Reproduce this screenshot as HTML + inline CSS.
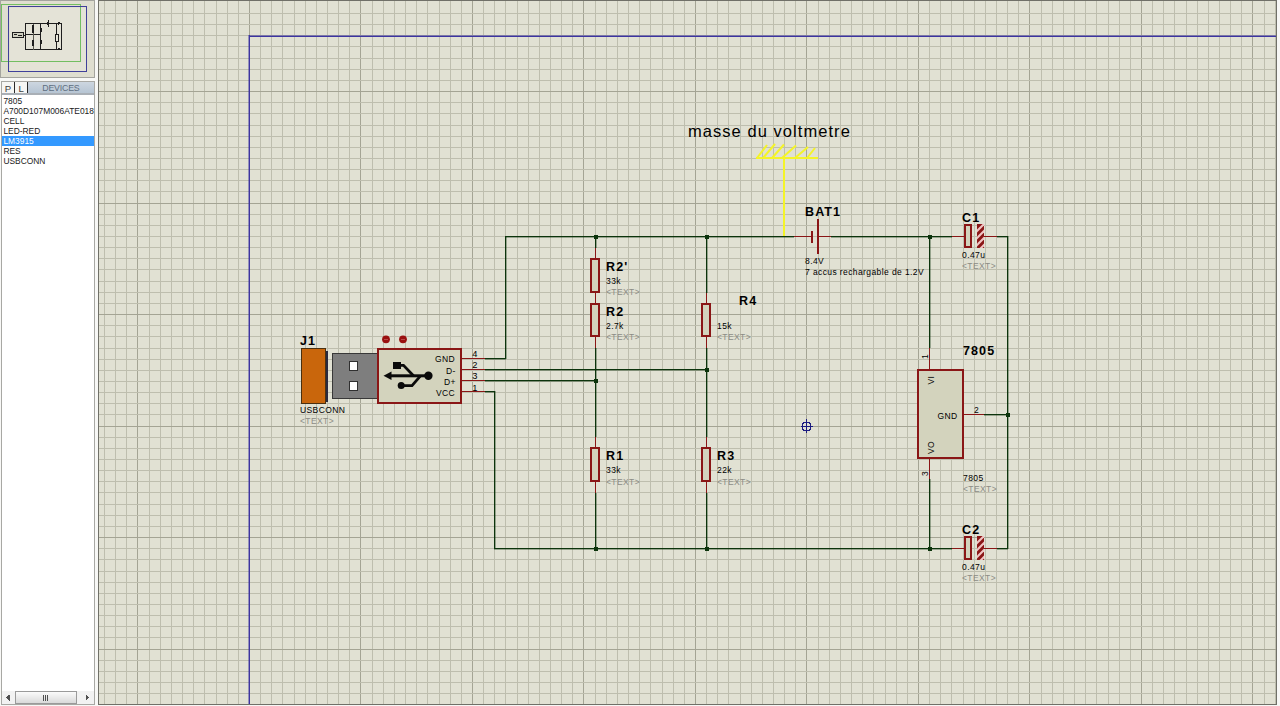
<!DOCTYPE html>
<html><head><meta charset="utf-8"><style>
html,body{margin:0;padding:0;width:1280px;height:706px;overflow:hidden;background:#F7F7F5;}
svg{position:absolute;left:0;top:0;font-family:"Liberation Sans",sans-serif;}
#list{position:absolute;left:1px;top:81px;width:93px;height:623px;background:#FFFFFF;border:1px solid #9C9C98;border-top:none;font-family:"Liberation Sans",sans-serif;}
#hdr{position:relative;height:14px;background:linear-gradient(#C9D3DE,#B2C2D2);border-bottom:1px solid #9AA4AE;font-size:9px;}
.tb{position:absolute;top:0;height:13px;width:11px;background:#F2F2EE;border-right:1px solid #606060;color:#303030;text-align:center;line-height:13px;font-size:9.5px;}
#dev{position:absolute;left:27px;right:0;top:0;height:14px;line-height:14px;text-align:center;color:#7A8898;font-size:9px;letter-spacing:0.3px;}
.it{height:10px;line-height:10px;font-size:9px;padding-left:2px;color:#141414;white-space:nowrap;}
.sel{background:#3399FF;color:#FFFFFF;}
#sb{position:absolute;left:0;right:0;bottom:0;height:12px;background:#F0F0F0;}
</style></head><body>
<svg width="1280" height="706" viewBox="0 0 1280 706" shape-rendering="crispEdges">
<rect x="98" y="0" width="1178" height="704" fill="#E1E1D3"/><rect x="104" y="0" width="1" height="704" fill="#BEBEAE"/><rect x="115" y="0" width="1" height="704" fill="#BEBEAE"/><rect x="126" y="0" width="1" height="704" fill="#BEBEAE"/><rect x="137" y="0" width="1" height="704" fill="#A4A494"/><rect x="149" y="0" width="1" height="704" fill="#BEBEAE"/><rect x="160" y="0" width="1" height="704" fill="#BEBEAE"/><rect x="171" y="0" width="1" height="704" fill="#BEBEAE"/><rect x="182" y="0" width="1" height="704" fill="#BEBEAE"/><rect x="193" y="0" width="1" height="704" fill="#BEBEAE"/><rect x="204" y="0" width="1" height="704" fill="#BEBEAE"/><rect x="216" y="0" width="1" height="704" fill="#BEBEAE"/><rect x="227" y="0" width="1" height="704" fill="#BEBEAE"/><rect x="238" y="0" width="1" height="704" fill="#BEBEAE"/><rect x="249" y="0" width="1" height="704" fill="#A4A494"/><rect x="260" y="0" width="1" height="704" fill="#BEBEAE"/><rect x="271" y="0" width="1" height="704" fill="#BEBEAE"/><rect x="282" y="0" width="1" height="704" fill="#BEBEAE"/><rect x="294" y="0" width="1" height="704" fill="#BEBEAE"/><rect x="305" y="0" width="1" height="704" fill="#BEBEAE"/><rect x="316" y="0" width="1" height="704" fill="#BEBEAE"/><rect x="327" y="0" width="1" height="704" fill="#BEBEAE"/><rect x="338" y="0" width="1" height="704" fill="#BEBEAE"/><rect x="349" y="0" width="1" height="704" fill="#BEBEAE"/><rect x="360" y="0" width="1" height="704" fill="#A4A494"/><rect x="372" y="0" width="1" height="704" fill="#BEBEAE"/><rect x="383" y="0" width="1" height="704" fill="#BEBEAE"/><rect x="394" y="0" width="1" height="704" fill="#BEBEAE"/><rect x="405" y="0" width="1" height="704" fill="#BEBEAE"/><rect x="416" y="0" width="1" height="704" fill="#BEBEAE"/><rect x="427" y="0" width="1" height="704" fill="#BEBEAE"/><rect x="439" y="0" width="1" height="704" fill="#BEBEAE"/><rect x="450" y="0" width="1" height="704" fill="#BEBEAE"/><rect x="461" y="0" width="1" height="704" fill="#BEBEAE"/><rect x="472" y="0" width="1" height="704" fill="#A4A494"/><rect x="483" y="0" width="1" height="704" fill="#BEBEAE"/><rect x="494" y="0" width="1" height="704" fill="#BEBEAE"/><rect x="505" y="0" width="1" height="704" fill="#BEBEAE"/><rect x="517" y="0" width="1" height="704" fill="#BEBEAE"/><rect x="528" y="0" width="1" height="704" fill="#BEBEAE"/><rect x="539" y="0" width="1" height="704" fill="#BEBEAE"/><rect x="550" y="0" width="1" height="704" fill="#BEBEAE"/><rect x="561" y="0" width="1" height="704" fill="#BEBEAE"/><rect x="572" y="0" width="1" height="704" fill="#BEBEAE"/><rect x="583" y="0" width="1" height="704" fill="#A4A494"/><rect x="595" y="0" width="1" height="704" fill="#BEBEAE"/><rect x="606" y="0" width="1" height="704" fill="#BEBEAE"/><rect x="617" y="0" width="1" height="704" fill="#BEBEAE"/><rect x="628" y="0" width="1" height="704" fill="#BEBEAE"/><rect x="639" y="0" width="1" height="704" fill="#BEBEAE"/><rect x="650" y="0" width="1" height="704" fill="#BEBEAE"/><rect x="662" y="0" width="1" height="704" fill="#BEBEAE"/><rect x="673" y="0" width="1" height="704" fill="#BEBEAE"/><rect x="684" y="0" width="1" height="704" fill="#BEBEAE"/><rect x="695" y="0" width="1" height="704" fill="#A4A494"/><rect x="706" y="0" width="1" height="704" fill="#BEBEAE"/><rect x="717" y="0" width="1" height="704" fill="#BEBEAE"/><rect x="728" y="0" width="1" height="704" fill="#BEBEAE"/><rect x="740" y="0" width="1" height="704" fill="#BEBEAE"/><rect x="751" y="0" width="1" height="704" fill="#BEBEAE"/><rect x="762" y="0" width="1" height="704" fill="#BEBEAE"/><rect x="773" y="0" width="1" height="704" fill="#BEBEAE"/><rect x="784" y="0" width="1" height="704" fill="#BEBEAE"/><rect x="795" y="0" width="1" height="704" fill="#BEBEAE"/><rect x="806" y="0" width="1" height="704" fill="#A4A494"/><rect x="818" y="0" width="1" height="704" fill="#BEBEAE"/><rect x="829" y="0" width="1" height="704" fill="#BEBEAE"/><rect x="840" y="0" width="1" height="704" fill="#BEBEAE"/><rect x="851" y="0" width="1" height="704" fill="#BEBEAE"/><rect x="862" y="0" width="1" height="704" fill="#BEBEAE"/><rect x="873" y="0" width="1" height="704" fill="#BEBEAE"/><rect x="885" y="0" width="1" height="704" fill="#BEBEAE"/><rect x="896" y="0" width="1" height="704" fill="#BEBEAE"/><rect x="907" y="0" width="1" height="704" fill="#BEBEAE"/><rect x="918" y="0" width="1" height="704" fill="#A4A494"/><rect x="929" y="0" width="1" height="704" fill="#BEBEAE"/><rect x="940" y="0" width="1" height="704" fill="#BEBEAE"/><rect x="951" y="0" width="1" height="704" fill="#BEBEAE"/><rect x="963" y="0" width="1" height="704" fill="#BEBEAE"/><rect x="974" y="0" width="1" height="704" fill="#BEBEAE"/><rect x="985" y="0" width="1" height="704" fill="#BEBEAE"/><rect x="996" y="0" width="1" height="704" fill="#BEBEAE"/><rect x="1007" y="0" width="1" height="704" fill="#BEBEAE"/><rect x="1018" y="0" width="1" height="704" fill="#BEBEAE"/><rect x="1029" y="0" width="1" height="704" fill="#A4A494"/><rect x="1041" y="0" width="1" height="704" fill="#BEBEAE"/><rect x="1052" y="0" width="1" height="704" fill="#BEBEAE"/><rect x="1063" y="0" width="1" height="704" fill="#BEBEAE"/><rect x="1074" y="0" width="1" height="704" fill="#BEBEAE"/><rect x="1085" y="0" width="1" height="704" fill="#BEBEAE"/><rect x="1096" y="0" width="1" height="704" fill="#BEBEAE"/><rect x="1108" y="0" width="1" height="704" fill="#BEBEAE"/><rect x="1119" y="0" width="1" height="704" fill="#BEBEAE"/><rect x="1130" y="0" width="1" height="704" fill="#BEBEAE"/><rect x="1141" y="0" width="1" height="704" fill="#A4A494"/><rect x="1152" y="0" width="1" height="704" fill="#BEBEAE"/><rect x="1163" y="0" width="1" height="704" fill="#BEBEAE"/><rect x="1174" y="0" width="1" height="704" fill="#BEBEAE"/><rect x="1186" y="0" width="1" height="704" fill="#BEBEAE"/><rect x="1197" y="0" width="1" height="704" fill="#BEBEAE"/><rect x="1208" y="0" width="1" height="704" fill="#BEBEAE"/><rect x="1219" y="0" width="1" height="704" fill="#BEBEAE"/><rect x="1230" y="0" width="1" height="704" fill="#BEBEAE"/><rect x="1241" y="0" width="1" height="704" fill="#BEBEAE"/><rect x="1252" y="0" width="1" height="704" fill="#A4A494"/><rect x="1264" y="0" width="1" height="704" fill="#BEBEAE"/><rect x="1275" y="0" width="1" height="704" fill="#BEBEAE"/><rect x="98" y="13" width="1178" height="1" fill="#BEBEAE"/><rect x="98" y="24" width="1178" height="1" fill="#BEBEAE"/><rect x="98" y="35" width="1178" height="1" fill="#BEBEAE"/><rect x="98" y="46" width="1178" height="1" fill="#BEBEAE"/><rect x="98" y="58" width="1178" height="1" fill="#BEBEAE"/><rect x="98" y="69" width="1178" height="1" fill="#BEBEAE"/><rect x="98" y="80" width="1178" height="1" fill="#BEBEAE"/><rect x="98" y="91" width="1178" height="1" fill="#A4A494"/><rect x="98" y="102" width="1178" height="1" fill="#BEBEAE"/><rect x="98" y="113" width="1178" height="1" fill="#BEBEAE"/><rect x="98" y="125" width="1178" height="1" fill="#BEBEAE"/><rect x="98" y="136" width="1178" height="1" fill="#BEBEAE"/><rect x="98" y="147" width="1178" height="1" fill="#BEBEAE"/><rect x="98" y="158" width="1178" height="1" fill="#BEBEAE"/><rect x="98" y="169" width="1178" height="1" fill="#BEBEAE"/><rect x="98" y="180" width="1178" height="1" fill="#BEBEAE"/><rect x="98" y="191" width="1178" height="1" fill="#BEBEAE"/><rect x="98" y="203" width="1178" height="1" fill="#A4A494"/><rect x="98" y="214" width="1178" height="1" fill="#BEBEAE"/><rect x="98" y="225" width="1178" height="1" fill="#BEBEAE"/><rect x="98" y="236" width="1178" height="1" fill="#BEBEAE"/><rect x="98" y="247" width="1178" height="1" fill="#BEBEAE"/><rect x="98" y="258" width="1178" height="1" fill="#BEBEAE"/><rect x="98" y="269" width="1178" height="1" fill="#BEBEAE"/><rect x="98" y="281" width="1178" height="1" fill="#BEBEAE"/><rect x="98" y="292" width="1178" height="1" fill="#BEBEAE"/><rect x="98" y="303" width="1178" height="1" fill="#BEBEAE"/><rect x="98" y="314" width="1178" height="1" fill="#A4A494"/><rect x="98" y="325" width="1178" height="1" fill="#BEBEAE"/><rect x="98" y="336" width="1178" height="1" fill="#BEBEAE"/><rect x="98" y="348" width="1178" height="1" fill="#BEBEAE"/><rect x="98" y="359" width="1178" height="1" fill="#BEBEAE"/><rect x="98" y="370" width="1178" height="1" fill="#BEBEAE"/><rect x="98" y="381" width="1178" height="1" fill="#BEBEAE"/><rect x="98" y="392" width="1178" height="1" fill="#BEBEAE"/><rect x="98" y="403" width="1178" height="1" fill="#BEBEAE"/><rect x="98" y="414" width="1178" height="1" fill="#BEBEAE"/><rect x="98" y="426" width="1178" height="1" fill="#A4A494"/><rect x="98" y="437" width="1178" height="1" fill="#BEBEAE"/><rect x="98" y="448" width="1178" height="1" fill="#BEBEAE"/><rect x="98" y="459" width="1178" height="1" fill="#BEBEAE"/><rect x="98" y="470" width="1178" height="1" fill="#BEBEAE"/><rect x="98" y="481" width="1178" height="1" fill="#BEBEAE"/><rect x="98" y="492" width="1178" height="1" fill="#BEBEAE"/><rect x="98" y="504" width="1178" height="1" fill="#BEBEAE"/><rect x="98" y="515" width="1178" height="1" fill="#BEBEAE"/><rect x="98" y="526" width="1178" height="1" fill="#BEBEAE"/><rect x="98" y="537" width="1178" height="1" fill="#A4A494"/><rect x="98" y="548" width="1178" height="1" fill="#BEBEAE"/><rect x="98" y="559" width="1178" height="1" fill="#BEBEAE"/><rect x="98" y="571" width="1178" height="1" fill="#BEBEAE"/><rect x="98" y="582" width="1178" height="1" fill="#BEBEAE"/><rect x="98" y="593" width="1178" height="1" fill="#BEBEAE"/><rect x="98" y="604" width="1178" height="1" fill="#BEBEAE"/><rect x="98" y="615" width="1178" height="1" fill="#BEBEAE"/><rect x="98" y="626" width="1178" height="1" fill="#BEBEAE"/><rect x="98" y="637" width="1178" height="1" fill="#BEBEAE"/><rect x="98" y="649" width="1178" height="1" fill="#A4A494"/><rect x="98" y="660" width="1178" height="1" fill="#BEBEAE"/><rect x="98" y="671" width="1178" height="1" fill="#BEBEAE"/><rect x="98" y="682" width="1178" height="1" fill="#BEBEAE"/><rect x="98" y="693" width="1178" height="1" fill="#BEBEAE"/><rect x="98" y="0" width="1179" height="1" fill="#707068"/><rect x="98" y="0" width="1" height="705" fill="#707068"/><rect x="1276" y="0" width="1" height="705" fill="#707068"/><rect x="98" y="704" width="1179" height="1" fill="#707068"/><rect x="249" y="36" width="1027" height="1" fill="#3C34A0"/><rect x="249" y="35" width="1" height="669" fill="#3C34A0"/><rect x="249" y="35" width="1027" height="1" fill="#3C34A0" fill-opacity="0.5"/><rect x="248" y="35" width="1" height="669" fill="#3C34A0" fill-opacity="0.45"/><rect x="505" y="237" width="289" height="1" fill="#0C340C" fill-opacity="0.35"/><rect x="505" y="236" width="289" height="1" fill="#0C340C"/><rect x="831" y="237" width="121" height="1" fill="#0C340C" fill-opacity="0.35"/><rect x="831" y="236" width="121" height="1" fill="#0C340C"/><rect x="997" y="237" width="11" height="1" fill="#0C340C" fill-opacity="0.35"/><rect x="997" y="236" width="11" height="1" fill="#0C340C"/><rect x="506" y="236" width="1" height="123" fill="#0C340C" fill-opacity="0.35"/><rect x="505" y="236" width="1" height="123" fill="#0C340C"/><rect x="485" y="359" width="21" height="1" fill="#0C340C" fill-opacity="0.35"/><rect x="485" y="358" width="21" height="1" fill="#0C340C"/><rect x="485" y="370" width="222" height="1" fill="#0C340C" fill-opacity="0.35"/><rect x="485" y="369" width="222" height="1" fill="#0C340C"/><rect x="485" y="381" width="111" height="1" fill="#0C340C" fill-opacity="0.35"/><rect x="485" y="380" width="111" height="1" fill="#0C340C"/><rect x="485" y="392" width="10" height="1" fill="#0C340C" fill-opacity="0.35"/><rect x="485" y="391" width="10" height="1" fill="#0C340C"/><rect x="495" y="391" width="1" height="158" fill="#0C340C" fill-opacity="0.35"/><rect x="494" y="391" width="1" height="158" fill="#0C340C"/><rect x="494" y="549" width="458" height="1" fill="#0C340C" fill-opacity="0.35"/><rect x="494" y="548" width="458" height="1" fill="#0C340C"/><rect x="997" y="549" width="11" height="1" fill="#0C340C" fill-opacity="0.35"/><rect x="997" y="548" width="11" height="1" fill="#0C340C"/><rect x="1008" y="236" width="1" height="313" fill="#0C340C" fill-opacity="0.35"/><rect x="1007" y="236" width="1" height="313" fill="#0C340C"/><rect x="984" y="415" width="24" height="1" fill="#0C340C" fill-opacity="0.35"/><rect x="984" y="414" width="24" height="1" fill="#0C340C"/><rect x="596" y="236" width="1" height="12" fill="#0C340C" fill-opacity="0.35"/><rect x="595" y="236" width="1" height="12" fill="#0C340C"/><rect x="596" y="348" width="1" height="89" fill="#0C340C" fill-opacity="0.35"/><rect x="595" y="348" width="1" height="89" fill="#0C340C"/><rect x="596" y="493" width="1" height="56" fill="#0C340C" fill-opacity="0.35"/><rect x="595" y="493" width="1" height="56" fill="#0C340C"/><rect x="707" y="236" width="1" height="57" fill="#0C340C" fill-opacity="0.35"/><rect x="706" y="236" width="1" height="57" fill="#0C340C"/><rect x="707" y="348" width="1" height="89" fill="#0C340C" fill-opacity="0.35"/><rect x="706" y="348" width="1" height="89" fill="#0C340C"/><rect x="707" y="493" width="1" height="56" fill="#0C340C" fill-opacity="0.35"/><rect x="706" y="493" width="1" height="56" fill="#0C340C"/><rect x="930" y="236" width="1" height="112" fill="#0C340C" fill-opacity="0.35"/><rect x="929" y="236" width="1" height="112" fill="#0C340C"/><rect x="930" y="479" width="1" height="70" fill="#0C340C" fill-opacity="0.35"/><rect x="929" y="479" width="1" height="70" fill="#0C340C"/><rect x="593.5" y="234.5" width="4" height="4" fill="#0C340C"/><rect x="704.5" y="234.5" width="4" height="4" fill="#0C340C"/><rect x="927.5" y="234.5" width="4" height="4" fill="#0C340C"/><rect x="704.5" y="367.5" width="4" height="4" fill="#0C340C"/><rect x="593.5" y="378.5" width="4" height="4" fill="#0C340C"/><rect x="593.5" y="546.5" width="4" height="4" fill="#0C340C"/><rect x="704.5" y="546.5" width="4" height="4" fill="#0C340C"/><rect x="927.5" y="546.5" width="4" height="4" fill="#0C340C"/><rect x="1005.5" y="412.5" width="4" height="4" fill="#0C340C"/><rect x="595" y="248" width="1" height="10" fill="#8A1616"/><rect x="595" y="293" width="1" height="10" fill="#8A1616"/><rect x="591.0" y="259.0" width="8" height="33" fill="#D3D3BD" stroke="#8A1616" stroke-width="2"/><rect x="595" y="293" width="1" height="10" fill="#8A1616"/><rect x="595" y="337" width="1" height="11" fill="#8A1616"/><rect x="591.0" y="304.0" width="8" height="32" fill="#D3D3BD" stroke="#8A1616" stroke-width="2"/><rect x="706" y="293" width="1" height="10" fill="#8A1616"/><rect x="706" y="337" width="1" height="11" fill="#8A1616"/><rect x="702.0" y="304.0" width="8" height="32" fill="#D3D3BD" stroke="#8A1616" stroke-width="2"/><rect x="595" y="437" width="1" height="10" fill="#8A1616"/><rect x="595" y="482" width="1" height="11" fill="#8A1616"/><rect x="591.0" y="448.0" width="8" height="33" fill="#D3D3BD" stroke="#8A1616" stroke-width="2"/><rect x="706" y="437" width="1" height="10" fill="#8A1616"/><rect x="706" y="482" width="1" height="11" fill="#8A1616"/><rect x="702.0" y="448.0" width="8" height="33" fill="#D3D3BD" stroke="#8A1616" stroke-width="2"/><rect x="794" y="236" width="17" height="1" fill="#8A1616"/><rect x="811" y="231" width="2" height="12" fill="#8A1616"/><rect x="817" y="219" width="2" height="35" fill="#8A1616"/><rect x="819" y="236" width="12" height="1" fill="#8A1616"/><rect x="783" y="158" width="2" height="78" fill="#F4F428"/><rect x="756" y="157" width="62" height="2" fill="#F4F428"/><line x1="757" y1="158" x2="767" y2="145" stroke="#F4F428" stroke-width="2" shape-rendering="geometricPrecision"/><line x1="763" y1="158" x2="775" y2="144" stroke="#F4F428" stroke-width="2" shape-rendering="geometricPrecision"/><line x1="772" y1="158" x2="784" y2="144.5" stroke="#F4F428" stroke-width="2" shape-rendering="geometricPrecision"/><line x1="782" y1="158" x2="796" y2="145.5" stroke="#F4F428" stroke-width="2" shape-rendering="geometricPrecision"/><line x1="795" y1="158" x2="808" y2="147" stroke="#F4F428" stroke-width="2" shape-rendering="geometricPrecision"/><line x1="807" y1="158" x2="815" y2="148" stroke="#F4F428" stroke-width="2" shape-rendering="geometricPrecision"/><rect x="952" y="236" width="13" height="1" fill="#8A1616"/><rect x="984" y="236" width="13" height="1" fill="#8A1616"/><rect x="965.0" y="225.0" width="6" height="22" fill="#D3D3BD" stroke="#8A1616" stroke-width="2"/><rect x="977" y="224" width="7" height="24" fill="#8A1616"/><clipPath id="cp236"><rect x="977" y="224" width="7" height="24"/></clipPath><line x1="976" y1="232" x2="985" y2="223" stroke="#F2C4C4" stroke-width="2" clip-path="url(#cp236)" shape-rendering="geometricPrecision"/><line x1="976" y1="239" x2="985" y2="230" stroke="#F2C4C4" stroke-width="2" clip-path="url(#cp236)" shape-rendering="geometricPrecision"/><line x1="976" y1="246" x2="985" y2="237" stroke="#F2C4C4" stroke-width="2" clip-path="url(#cp236)" shape-rendering="geometricPrecision"/><line x1="976" y1="253" x2="985" y2="244" stroke="#F2C4C4" stroke-width="2" clip-path="url(#cp236)" shape-rendering="geometricPrecision"/><rect x="952" y="548" width="13" height="1" fill="#8A1616"/><rect x="984" y="548" width="13" height="1" fill="#8A1616"/><rect x="965.0" y="537.0" width="6" height="22" fill="#D3D3BD" stroke="#8A1616" stroke-width="2"/><rect x="977" y="536" width="7" height="24" fill="#8A1616"/><clipPath id="cp548"><rect x="977" y="536" width="7" height="24"/></clipPath><line x1="976" y1="544" x2="985" y2="535" stroke="#F2C4C4" stroke-width="2" clip-path="url(#cp548)" shape-rendering="geometricPrecision"/><line x1="976" y1="551" x2="985" y2="542" stroke="#F2C4C4" stroke-width="2" clip-path="url(#cp548)" shape-rendering="geometricPrecision"/><line x1="976" y1="558" x2="985" y2="549" stroke="#F2C4C4" stroke-width="2" clip-path="url(#cp548)" shape-rendering="geometricPrecision"/><line x1="976" y1="565" x2="985" y2="556" stroke="#F2C4C4" stroke-width="2" clip-path="url(#cp548)" shape-rendering="geometricPrecision"/><rect x="929" y="348" width="1" height="22" fill="#8A1616"/><rect x="929" y="459" width="1" height="20" fill="#8A1616"/><rect x="918.0" y="370.0" width="45" height="88" fill="#D3D3BD" stroke="#8A1616" stroke-width="2"/><rect x="964" y="414" width="20" height="1" fill="#8A1616"/><rect x="301.5" y="348.5" width="24" height="55" fill="#C9660C" stroke="#4A3010" stroke-width="1"/><rect x="326" y="351" width="2" height="51" fill="#2A2A40"/><rect x="332.5" y="353.5" width="45" height="45" fill="#7E7E7E" stroke="#383838" stroke-width="1"/><rect x="349.5" y="361.5" width="7.5" height="9" fill="#FFFFFF" stroke="#303030" stroke-width="1"/><rect x="349.5" y="381.5" width="7.5" height="9" fill="#FFFFFF" stroke="#303030" stroke-width="1"/><rect x="378.0" y="349.0" width="83" height="54" fill="#D3D3BD" stroke="#8A1616" stroke-width="2"/><rect x="462" y="358" width="23" height="1" fill="#8A1616"/><rect x="462" y="369" width="23" height="1" fill="#8A1616"/><rect x="462" y="380" width="23" height="1" fill="#8A1616"/><rect x="462" y="391" width="23" height="1" fill="#8A1616"/><circle cx="386" cy="339.3" r="3.9" fill="#9A1010" shape-rendering="geometricPrecision"/><rect x="384" y="339" width="4" height="1" fill="#B84848"/><circle cx="403" cy="339.3" r="3.9" fill="#9A1010" shape-rendering="geometricPrecision"/><rect x="401" y="339" width="4" height="1" fill="#B84848"/><path d="M383.5 375.8 L391.5 371.6 L391.5 380 Z" fill="#0A0A0A" shape-rendering="geometricPrecision"/><rect x="390" y="374.3" width="36" height="3" fill="#0A0A0A" shape-rendering="geometricPrecision"/><circle cx="428.4" cy="375.8" r="4.2" fill="#0A0A0A" shape-rendering="geometricPrecision"/><rect x="393" y="362" width="7.8" height="6.8" fill="#0A0A0A"/><path d="M400 365.4 L403.5 365.4 L413.5 375.8" fill="none" stroke="#0A0A0A" stroke-width="2.8" shape-rendering="geometricPrecision"/><circle cx="401.2" cy="385.6" r="3.5" fill="#0A0A0A" shape-rendering="geometricPrecision"/><path d="M401 385.6 L412 385.6 L420.5 375.8" fill="none" stroke="#0A0A0A" stroke-width="2.8" shape-rendering="geometricPrecision"/><circle cx="806.5" cy="426.5" r="4.5" fill="none" stroke="#1C1C80" stroke-width="1.3"/><rect x="801" y="426" width="12" height="1" fill="#1C1C80"/><rect x="806" y="419" width="1" height="14" fill="#1C1C80"/><text x="688" y="137" font-size="16.5" fill="#000000" font-weight="normal" text-anchor="start"  letter-spacing="1.05">masse du voltmetre</text><text x="300" y="345" font-size="12.5" fill="#000000" font-weight="bold" text-anchor="start"  letter-spacing="1.1">J1</text><text x="300" y="413" font-size="8.5" fill="#000000" font-weight="normal" text-anchor="start"  letter-spacing="0.4">USBCONN</text><text x="300" y="424" font-size="8.5" fill="#8C8C86" font-weight="normal" text-anchor="start"  letter-spacing="0.4">&lt;TEXT&gt;</text><text x="435" y="361.7" font-size="8.5" fill="#000000" font-weight="normal" text-anchor="start"  letter-spacing="0.4">GND</text><text x="446" y="374" font-size="8.5" fill="#000000" font-weight="normal" text-anchor="start"  letter-spacing="0.4">D-</text><text x="444" y="385" font-size="8.5" fill="#000000" font-weight="normal" text-anchor="start"  letter-spacing="0.4">D+</text><text x="436" y="396" font-size="8.5" fill="#000000" font-weight="normal" text-anchor="start"  letter-spacing="0.4">VCC</text><text x="472.3" y="357" font-size="9.3" fill="#000000" font-weight="normal" text-anchor="start"  letter-spacing="0">4</text><text x="472.3" y="368.3" font-size="9.3" fill="#000000" font-weight="normal" text-anchor="start"  letter-spacing="0">2</text><text x="472.3" y="379.3" font-size="9.3" fill="#000000" font-weight="normal" text-anchor="start"  letter-spacing="0">3</text><text x="472.3" y="390.5" font-size="9.3" fill="#000000" font-weight="normal" text-anchor="start"  letter-spacing="0">1</text><text x="606" y="270.5" font-size="12.5" fill="#000000" font-weight="bold" text-anchor="start"  letter-spacing="1.1">R2'</text><text x="606" y="284" font-size="8.5" fill="#000000" font-weight="normal" text-anchor="start"  letter-spacing="0.4">33k</text><text x="606" y="294.5" font-size="8.5" fill="#8C8C86" font-weight="normal" text-anchor="start"  letter-spacing="0.4">&lt;TEXT&gt;</text><text x="606" y="315.5" font-size="12.5" fill="#000000" font-weight="bold" text-anchor="start"  letter-spacing="1.1">R2</text><text x="606" y="329" font-size="8.5" fill="#000000" font-weight="normal" text-anchor="start"  letter-spacing="0.4">2.7k</text><text x="606" y="339.5" font-size="8.5" fill="#8C8C86" font-weight="normal" text-anchor="start"  letter-spacing="0.4">&lt;TEXT&gt;</text><text x="739" y="304.5" font-size="12.5" fill="#000000" font-weight="bold" text-anchor="start"  letter-spacing="1.1">R4</text><text x="717" y="329" font-size="8.5" fill="#000000" font-weight="normal" text-anchor="start"  letter-spacing="0.4">15k</text><text x="717" y="339.5" font-size="8.5" fill="#8C8C86" font-weight="normal" text-anchor="start"  letter-spacing="0.4">&lt;TEXT&gt;</text><text x="606" y="459.5" font-size="12.5" fill="#000000" font-weight="bold" text-anchor="start"  letter-spacing="1.1">R1</text><text x="606" y="473" font-size="8.5" fill="#000000" font-weight="normal" text-anchor="start"  letter-spacing="0.4">33k</text><text x="606" y="484.5" font-size="8.5" fill="#8C8C86" font-weight="normal" text-anchor="start"  letter-spacing="0.4">&lt;TEXT&gt;</text><text x="717" y="459.5" font-size="12.5" fill="#000000" font-weight="bold" text-anchor="start"  letter-spacing="1.1">R3</text><text x="717" y="473" font-size="8.5" fill="#000000" font-weight="normal" text-anchor="start"  letter-spacing="0.4">22k</text><text x="717" y="484.5" font-size="8.5" fill="#8C8C86" font-weight="normal" text-anchor="start"  letter-spacing="0.4">&lt;TEXT&gt;</text><text x="805" y="216" font-size="12.5" fill="#000000" font-weight="bold" text-anchor="start"  letter-spacing="1.1">BAT1</text><text x="805" y="263.5" font-size="8.5" fill="#000000" font-weight="normal" text-anchor="start"  letter-spacing="0.4">8.4V</text><text x="805" y="275" font-size="8.5" fill="#000000" font-weight="normal" text-anchor="start"  letter-spacing="0.4">7 accus rechargable de 1.2V</text><text x="962" y="221.5" font-size="12.5" fill="#000000" font-weight="bold" text-anchor="start"  letter-spacing="1.1">C1</text><text x="962" y="257.5" font-size="8.5" fill="#000000" font-weight="normal" text-anchor="start"  letter-spacing="0.4">0.47u</text><text x="962" y="268.5" font-size="8.5" fill="#8C8C86" font-weight="normal" text-anchor="start"  letter-spacing="0.4">&lt;TEXT&gt;</text><text x="962" y="534" font-size="12.5" fill="#000000" font-weight="bold" text-anchor="start"  letter-spacing="1.1">C2</text><text x="962" y="570" font-size="8.5" fill="#000000" font-weight="normal" text-anchor="start"  letter-spacing="0.4">0.47u</text><text x="962" y="581" font-size="8.5" fill="#8C8C86" font-weight="normal" text-anchor="start"  letter-spacing="0.4">&lt;TEXT&gt;</text><text x="963" y="355" font-size="12.5" fill="#000000" font-weight="bold" text-anchor="start"  letter-spacing="1.1">7805</text><text x="963" y="480.5" font-size="8.5" fill="#000000" font-weight="normal" text-anchor="start"  letter-spacing="0.4">7805</text><text x="963" y="491.5" font-size="8.5" fill="#8C8C86" font-weight="normal" text-anchor="start"  letter-spacing="0.4">&lt;TEXT&gt;</text><text x="937.5" y="419" font-size="8.5" fill="#000000" font-weight="normal" text-anchor="start"  letter-spacing="0.4">GND</text><text x="974" y="413" font-size="8.5" fill="#000000" font-weight="normal" text-anchor="start"  letter-spacing="0.4">2</text><text x="0" y="0" font-size="8.5" fill="#000000" font-weight="normal" text-anchor="start" transform="translate(927.5,359) rotate(-90)" letter-spacing="0.4">1</text><text x="0" y="0" font-size="8.5" fill="#000000" font-weight="normal" text-anchor="start" transform="translate(927.5,476) rotate(-90)" letter-spacing="0.4">3</text><text x="0" y="0" font-size="8.5" fill="#000000" font-weight="normal" text-anchor="start" transform="translate(933.5,384.5) rotate(-90)" letter-spacing="0.4">VI</text><text x="0" y="0" font-size="8.5" fill="#000000" font-weight="normal" text-anchor="start" transform="translate(933.5,454) rotate(-90)" letter-spacing="0.4">VO</text>
<rect x="0" y="0" width="98" height="706" fill="#F8F8F6"/><rect x="0" y="0" width="95" height="78" fill="#DFDED0"/><rect x="0.5" y="0.5" width="94" height="77" fill="none" stroke="#A4A49E" stroke-width="1"/><rect x="10" y="8" width="76" height="63" fill="#E4E3D7"/><rect x="1" y="4" width="80" height="1" fill="#72BE62"/><rect x="1" y="4" width="1" height="58" fill="#72BE62"/><rect x="80" y="4" width="1" height="58" fill="#72BE62"/><rect x="1" y="61" width="80" height="1" fill="#72BE62"/><rect x="8.5" y="6.5" width="78" height="65" fill="none" stroke="#40409A" stroke-width="1.2"/><rect x="12.5" y="32.5" width="11" height="5" fill="#D0D0C0" stroke="#1E1E1E" stroke-width="1"/><path d="M14 35 L17 34 M18 35 L22 35" stroke="#1E1E1E" stroke-width="1"/><path d="M23.5 35 L26 35 M25.7 23.5 L61.7 23.5 L61.7 49.3 L25.7 49.3 Z M25.7 34.3 L40.5 34.3 M40.5 23.5 L40.5 49.3 M56.7 23.5 L56.7 34.5 M56.7 41.5 L56.7 49.3" fill="none" stroke="#1E1E1E" stroke-width="1"/><rect x="55.3" y="34.5" width="3" height="7" fill="#E8E8DC" stroke="#1E1E1E" stroke-width="1"/><rect x="32.5" y="23.5" width="1" height="26" fill="#5A5A50"/><rect x="32" y="25" width="2" height="7.5" fill="#1E1E1E"/><rect x="32" y="40" width="2" height="5.5" fill="#1E1E1E"/><path d="M41 28 L42 30 L41 32 M41 40 L42 42 L41 44" stroke="#1E1E1E" stroke-width="1.2" fill="none"/><path d="M48.3 21.5 L48.3 25.5 L46.8 23.5 Z" stroke="#1E1E1E" stroke-width="1" fill="#1E1E1E"/><circle cx="58.9" cy="23.5" r="1.2" fill="#1E1E1E"/><circle cx="58.9" cy="49.2" r="1.2" fill="#1E1E1E"/><rect x="1" y="81" width="94" height="624" fill="#FFFFFF"/><rect x="1.5" y="81.5" width="93" height="623" fill="none" stroke="#A8A8A4" stroke-width="1"/><defs><linearGradient id="hg" x1="0" y1="0" x2="0" y2="1"><stop offset="0" stop-color="#CDD6E0"/><stop offset="1" stop-color="#B4C3D2"/></linearGradient><linearGradient id="tg" x1="0" y1="0" x2="0" y2="1"><stop offset="0" stop-color="#FCFCFC"/><stop offset="1" stop-color="#D8D8D8"/></linearGradient></defs><rect x="2" y="82" width="92" height="12" fill="url(#hg)"/><rect x="2" y="82" width="12" height="12" fill="#F6F6F4"/><rect x="15" y="82" width="12" height="12" fill="#F6F6F4"/><rect x="14" y="82" width="1" height="12" fill="#2A2A2A"/><rect x="27" y="82" width="1" height="12" fill="#2A2A2A"/><rect x="2" y="93" width="92" height="2" fill="#A9AFB6"/><text x="4.7" y="91.5" font-size="9.6" fill="#404040">P</text><text x="18.5" y="91.5" font-size="9.6" fill="#404040">L</text><text x="42.3" y="90.8" font-size="8.8" fill="#5E6E80" letter-spacing="-0.2">DEVICES</text><text transform="translate(3.4,104) scale(0.885,1)" font-size="9.5" fill="#1A1A1A">7805</text><text transform="translate(3.4,114) scale(0.885,1)" font-size="9.5" fill="#1A1A1A">A700D107M006ATE018</text><text transform="translate(3.4,124) scale(0.885,1)" font-size="9.5" fill="#1A1A1A">CELL</text><text transform="translate(3.4,134) scale(0.885,1)" font-size="9.5" fill="#1A1A1A">LED-RED</text><rect x="2" y="136" width="92" height="10" fill="#3399FF"/><text transform="translate(3.4,144) scale(0.885,1)" font-size="9.5" fill="#FFFFFF">LM3915</text><text transform="translate(3.4,154) scale(0.885,1)" font-size="9.5" fill="#1A1A1A">RES</text><text transform="translate(3.4,164) scale(0.885,1)" font-size="9.5" fill="#1A1A1A">USBCONN</text><rect x="2" y="691" width="92" height="13" fill="#F2F2F2"/><rect x="15.5" y="691.5" width="61" height="12" rx="1" fill="url(#tg)" stroke="#9A9A9A" stroke-width="1"/><path d="M43 695 L43 701 M45 695 L45 701 M47 695 L47 701" stroke="#505050" stroke-width="1"/><path d="M9.5 694.5 L6 697.5 L9.5 700.5 Z" fill="#505050"/><path d="M86 694.5 L89.5 697.5 L86 700.5 Z" fill="#505050"/>
</svg>
</body></html>
